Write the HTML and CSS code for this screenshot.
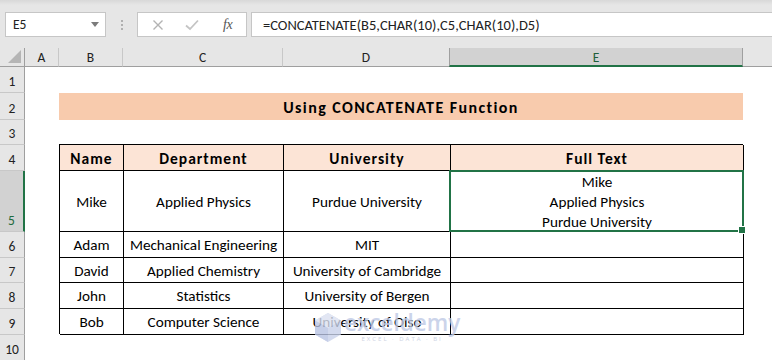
FILE: index.html
```html
<!DOCTYPE html>
<html>
<head>
<meta charset="utf-8">
<link rel="stylesheet" href="styles.css">
</head>
<body>
<div class="app">
  <div class="topbar">
    <div class="namebox"><span class="ref">E5</span><svg class="dd" width="8" height="5" viewBox="0 0 8 5"><path d="M0 0H8L4 5Z" fill="#7b7b7b"/></svg></div>
    <div class="grip"><i></i><i></i><i></i></div>
    <div class="fxbox">
      <svg class="ico" width="12" height="12" viewBox="0 0 12 12"><path d="M1.5 1.5L10.5 10.5M10.5 1.5L1.5 10.5" stroke="#b3b3b3" stroke-width="1.4" fill="none"/></svg>
      <svg class="ico" width="14" height="12" viewBox="0 0 14 12"><path d="M1 6.5L5 10L13 1.5" stroke="#c4c4c4" stroke-width="1.8" fill="none"/></svg>
      <span class="fx">fx</span>
    </div>
    <div class="formula">=CONCATENATE(B5,CHAR(10),C5,CHAR(10),D5)</div>
  </div>

  <div class="sheet">
    <div class="colhead corner"><svg width="13" height="13" viewBox="0 0 13 13"><path d="M13 0V13H0Z" fill="#b5b5b5"/></svg></div>
    <div class="colhead">A</div>
    <div class="colhead">B</div>
    <div class="colhead">C</div>
    <div class="colhead">D</div>
    <div class="colhead active">E</div>
    <div class="colhead filler"></div>

    <div class="rowhead r1">1</div>
    <div class="rowhead r2">2</div>
    <div class="rowhead r3">3</div>
    <div class="rowhead r4">4</div>
    <div class="rowhead r5 active">5</div>
    <div class="rowhead r6">6</div>
    <div class="rowhead r7">7</div>
    <div class="rowhead r8">8</div>
    <div class="rowhead r9">9</div>
    <div class="rowhead r10">10</div>

    <div class="title">Using CONCATENATE Function</div>

    <div class="table">
      <div class="cell th">Name</div>
      <div class="cell th">Department</div>
      <div class="cell th">University</div>
      <div class="cell th">Full Text</div>

      <div class="cell">Mike</div>
      <div class="cell">Applied Physics</div>
      <div class="cell">Purdue University</div>
      <div class="cell sel">
        <div class="multi"><span>Mike</span><span>Applied Physics</span><span>Purdue University</span></div>
        <div class="selbox"><b class="handle"></b></div>
      </div>

      <div class="cell">Adam</div>
      <div class="cell">Mechanical Engineering</div>
      <div class="cell">MIT</div>
      <div class="cell"></div>

      <div class="cell">David</div>
      <div class="cell">Applied Chemistry</div>
      <div class="cell">University of Cambridge</div>
      <div class="cell"></div>

      <div class="cell">John</div>
      <div class="cell">Statistics</div>
      <div class="cell">University of Bergen</div>
      <div class="cell"></div>

      <div class="cell">Bob</div>
      <div class="cell">Computer Science</div>
      <div class="cell">University of Olso</div>
      <div class="cell"></div>
    </div>
  </div>

  <div class="watermark">
    <svg class="wm-logo" width="30" height="31" viewBox="0 0 30 31"><path d="M15 1L28 8.5V22.5L15 30L2 22.5V8.5Z" fill="#c9d2ea"/><path d="M15 1L28 8.5L15 16L2 8.5Z" fill="#dbe1f1"/><path d="M15 16V30L2 22.5V8.5Z" fill="#b9c4e3"/></svg>
    <div class="wm-text">
      <span class="wm-big">exceldemy</span>
      <span class="wm-small">EXCEL · DATA · BI</span>
    </div>
  </div>
</div>
</body>
</html>
```

FILE: styles.css
```css
* { box-sizing: border-box; }
html, body { margin: 0; padding: 0; }
body {
  width: 772px;
  height: 360px;
  overflow: hidden;
  background: #ffffff;
  font-family: Carlito, Calibri, Lato, "Liberation Sans", sans-serif;
  color: #000;
}
.app { position: relative; width: 772px; height: 360px; overflow: hidden; }

/* ---------- formula bar ---------- */
.topbar {
  height: 48px;
  background: linear-gradient(#d8d8d8 0px, #e6e6e6 5px, #e6e6e6 100%);
  display: flex;
  align-items: flex-start;
  padding-top: 12px;
  padding-left: 5px;
}
.namebox {
  width: 101px;
  height: 25px;
  background: #fff;
  border: 1px solid #c6c6c6;
  display: flex;
  align-items: center;
  justify-content: space-between;
  padding: 0 6px 0 7px;
  font-size: 13.5px;
  color: #222;
}
.grip {
  width: 31px;
  height: 25px;
  display: flex;
  flex-direction: column;
  align-items: center;
  justify-content: center;
  gap: 2px;
}
.grip i { display: block; width: 2px; height: 2px; background: #b0b0b0; }
.fxbox {
  width: 110px;
  height: 25px;
  background: #fff;
  border: 1px solid #c6c6c6;
  display: flex;
  align-items: center;
  padding-left: 14px;
  gap: 21px;
}
.fx {
  font-family: "Liberation Serif", "DejaVu Serif", serif;
  font-style: italic;
  font-size: 14px;
  color: #555;
  margin-left: 3px;
  letter-spacing: -0.5px;
}
.formula {
  flex: 1;
  margin-left: 4px;
  height: 25px;
  background: #fff;
  border: 1px solid #c6c6c6;
  border-right: none;
  display: flex;
  align-items: center;
  padding-left: 11px;
  font-size: 14.5px;
  color: #222;
  white-space: nowrap;
}

/* ---------- sheet ---------- */
.sheet {
  display: grid;
  grid-template-columns: 25px 34px 64px 160px 167px 293px 1fr;
  grid-template-rows: 19px 26px 27px 25px 26px 61px 26px 25px 26px 26px 26px;
}
.colhead {
  background: #e6e6e6;
  border-bottom: 1px solid #9f9f9f;
  border-right: 1px solid #c8c8c8;
  display: flex;
  align-items: center;
  justify-content: center;
  font-size: 13.5px;
  color: #222;
  grid-row: 1;
}
.colhead.corner { justify-content: flex-end; align-items: flex-end; padding: 0 3px 3px 0; border-right: 1px solid #9f9f9f; }
.colhead.active {
  background: #d2d2d2;
  border-bottom: 2px solid #217346;
  border-left: 1px solid #9f9f9f;
  border-right: 1px solid #9f9f9f;
  color: #1f5f3a;
  margin-left: -1px;
  padding-top: 2px;
}
.colhead.filler { border-right: none; }

.rowhead {
  grid-column: 1;
  background: #e6e6e6;
  border-right: 1px solid #9f9f9f;
  border-bottom: 1px solid #c8c8c8;
  display: flex;
  align-items: flex-end;
  justify-content: center;
  padding-bottom: 2px;
  font-size: 13.5px;
  color: #222;
}
.r1 { grid-row: 2; } .r2 { grid-row: 3; } .r3 { grid-row: 4; } .r4 { grid-row: 5; }
.r5 { grid-row: 6; } .r6 { grid-row: 7; } .r7 { grid-row: 8; } .r8 { grid-row: 9; }
.r9 { grid-row: 10; } .r10 { grid-row: 11; }
.rowhead.active {
  background: #d2d2d2;
  border-right: 2px solid #217346;
  color: #1f6b3e;
}

.title {
  grid-column: 3 / 7;
  grid-row: 3;
  background: #f8cbad;
  display: flex;
  align-items: center;
  justify-content: center;
  font-weight: bold;
  font-size: 16px;
  letter-spacing: 1.4px;
  padding-top: 1px;
}

.table {
  grid-column: 3 / 7;
  grid-row: 5 / 11;
  display: grid;
  grid-template-columns: 64px 160px 167px 293px;
  grid-template-rows: 26px 61px 26px 25px 26px 26px;
  border-left: 1px solid #000;
  border-top: 1px solid #000;
  margin-top: -1px;
  margin-bottom: 1px;
}
.cell {
  border-right: 1px solid #000;
  border-bottom: 1px solid #000;
  display: flex;
  align-items: center;
  justify-content: center;
  font-size: 15.2px;
  white-space: nowrap;
  background: #fff;
  padding-top: 1px;
}
.cell.th {
  background: #fce4d6;
  font-weight: bold;
  font-size: 15.5px;
  letter-spacing: 1px;
}
.cell.sel { position: relative; }
.multi {
  display: flex;
  flex-direction: column;
  align-items: center;
  line-height: 20px;
}
.selbox {
  position: absolute;
  left: -2px;
  top: -1px;
  right: -1px;
  bottom: -1px;
  border: 2px solid #217346;
}
.handle {
  position: absolute;
  right: -4px;
  bottom: -4px;
  width: 6px;
  height: 6px;
  background: #217346;
  border: 1px solid #fff;
  box-sizing: content-box;
}

/* ---------- watermark ---------- */
.watermark {
  position: absolute;
  left: 313px;
  top: 312px;
  display: flex;
  align-items: flex-start;
  gap: 1px;
  opacity: 0.8;
  pointer-events: none;
}
.wm-text { display: flex; flex-direction: column; align-items: center; }
.wm-big {
  font-family: "Open Sans", "Noto Sans", sans-serif;
  font-weight: 600;
  font-size: 22.5px;
  line-height: 22px;
  color: #bfcae6;
  margin-top: 0px;
}
.wm-small {
  font-family: "Open Sans", "Noto Sans", sans-serif;
  font-size: 6px;
  letter-spacing: 2px;
  color: #c3cadc;
  margin-top: 1px;
}
```
